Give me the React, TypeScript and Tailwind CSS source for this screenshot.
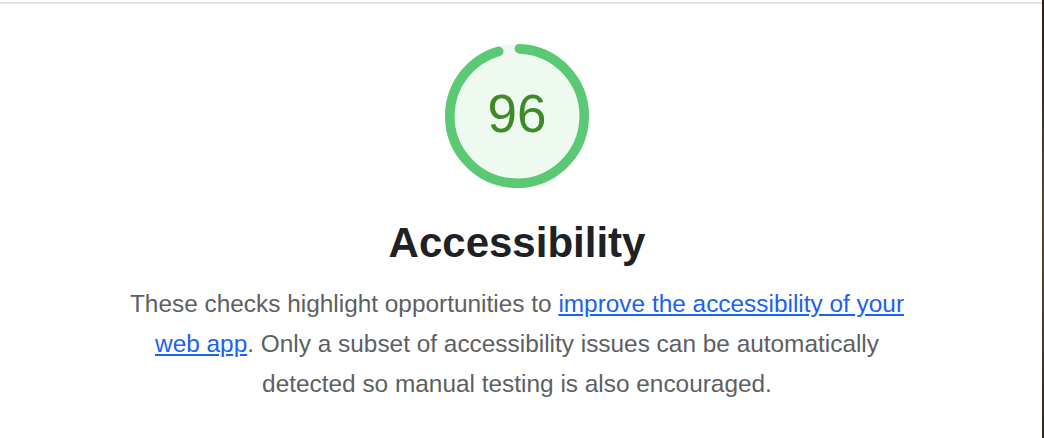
import React from "react";

function Gauge({ score }: { score: number }) {
  const r = 56;
  const sw = 8;
  const c = 2 * Math.PI * r;
  const rot = -90 + ((0.25 * sw) / c) * 360;
  const arc = score * c - sw / 2;
  return (
    <div className="relative w-[144px] h-[144px]">
      <svg viewBox="0 0 120 120" className="w-[144px] h-[144px]">
        <circle cx="60" cy="60" r={r} fill="#eef9f0" stroke="#eef9f0" strokeWidth={sw} />
        <circle
          cx="60"
          cy="60"
          r={r}
          fill="none"
          stroke="#5bc974"
          strokeWidth={sw}
          strokeLinecap="round"
          style={{
            transform: `rotate(${rot}deg)`,
            transformOrigin: "60px 60px",
            strokeDasharray: `${arc}px ${c}px`,
          }}
        />
      </svg>
      <div className="absolute inset-0 flex items-center justify-center pb-[5px] text-[53px] leading-none text-[#3d8a27] font-['Liberation_Sans',Arial,sans-serif]">
        96
      </div>
    </div>
  );
}

export default function App() {
  return (
    <div className="relative w-[1044px] h-[438px] bg-white overflow-hidden font-['Liberation_Sans',Arial,sans-serif]">
      <div className="absolute left-0 top-[2px] w-[1042px] h-[2px] bg-[#e2e2e2]" />
      <div className="absolute right-0 top-0 w-[2px] h-full bg-gradient-to-b from-[#2b2218] via-[#5a4432] to-[#3a2a1c]" />
      <div className="flex flex-col items-center pt-[44px] pr-[10px]">
        <Gauge score={0.96} />
        <h1 className="mt-[30px] text-[42px] leading-[50px] font-bold text-[#202124]">Accessibility</h1>
        <p className="mt-[16px] w-[800px] text-center text-[24.4px] leading-[40px] text-[#5d5f62]">
          These checks highlight opportunities to{" "}
          <a href="#" className="text-[#1a62f0] underline">
            improve the accessibility of your web app
          </a>
          . Only a subset of accessibility issues can be automatically detected so manual testing is also encouraged.
        </p>
      </div>
    </div>
  );
}
